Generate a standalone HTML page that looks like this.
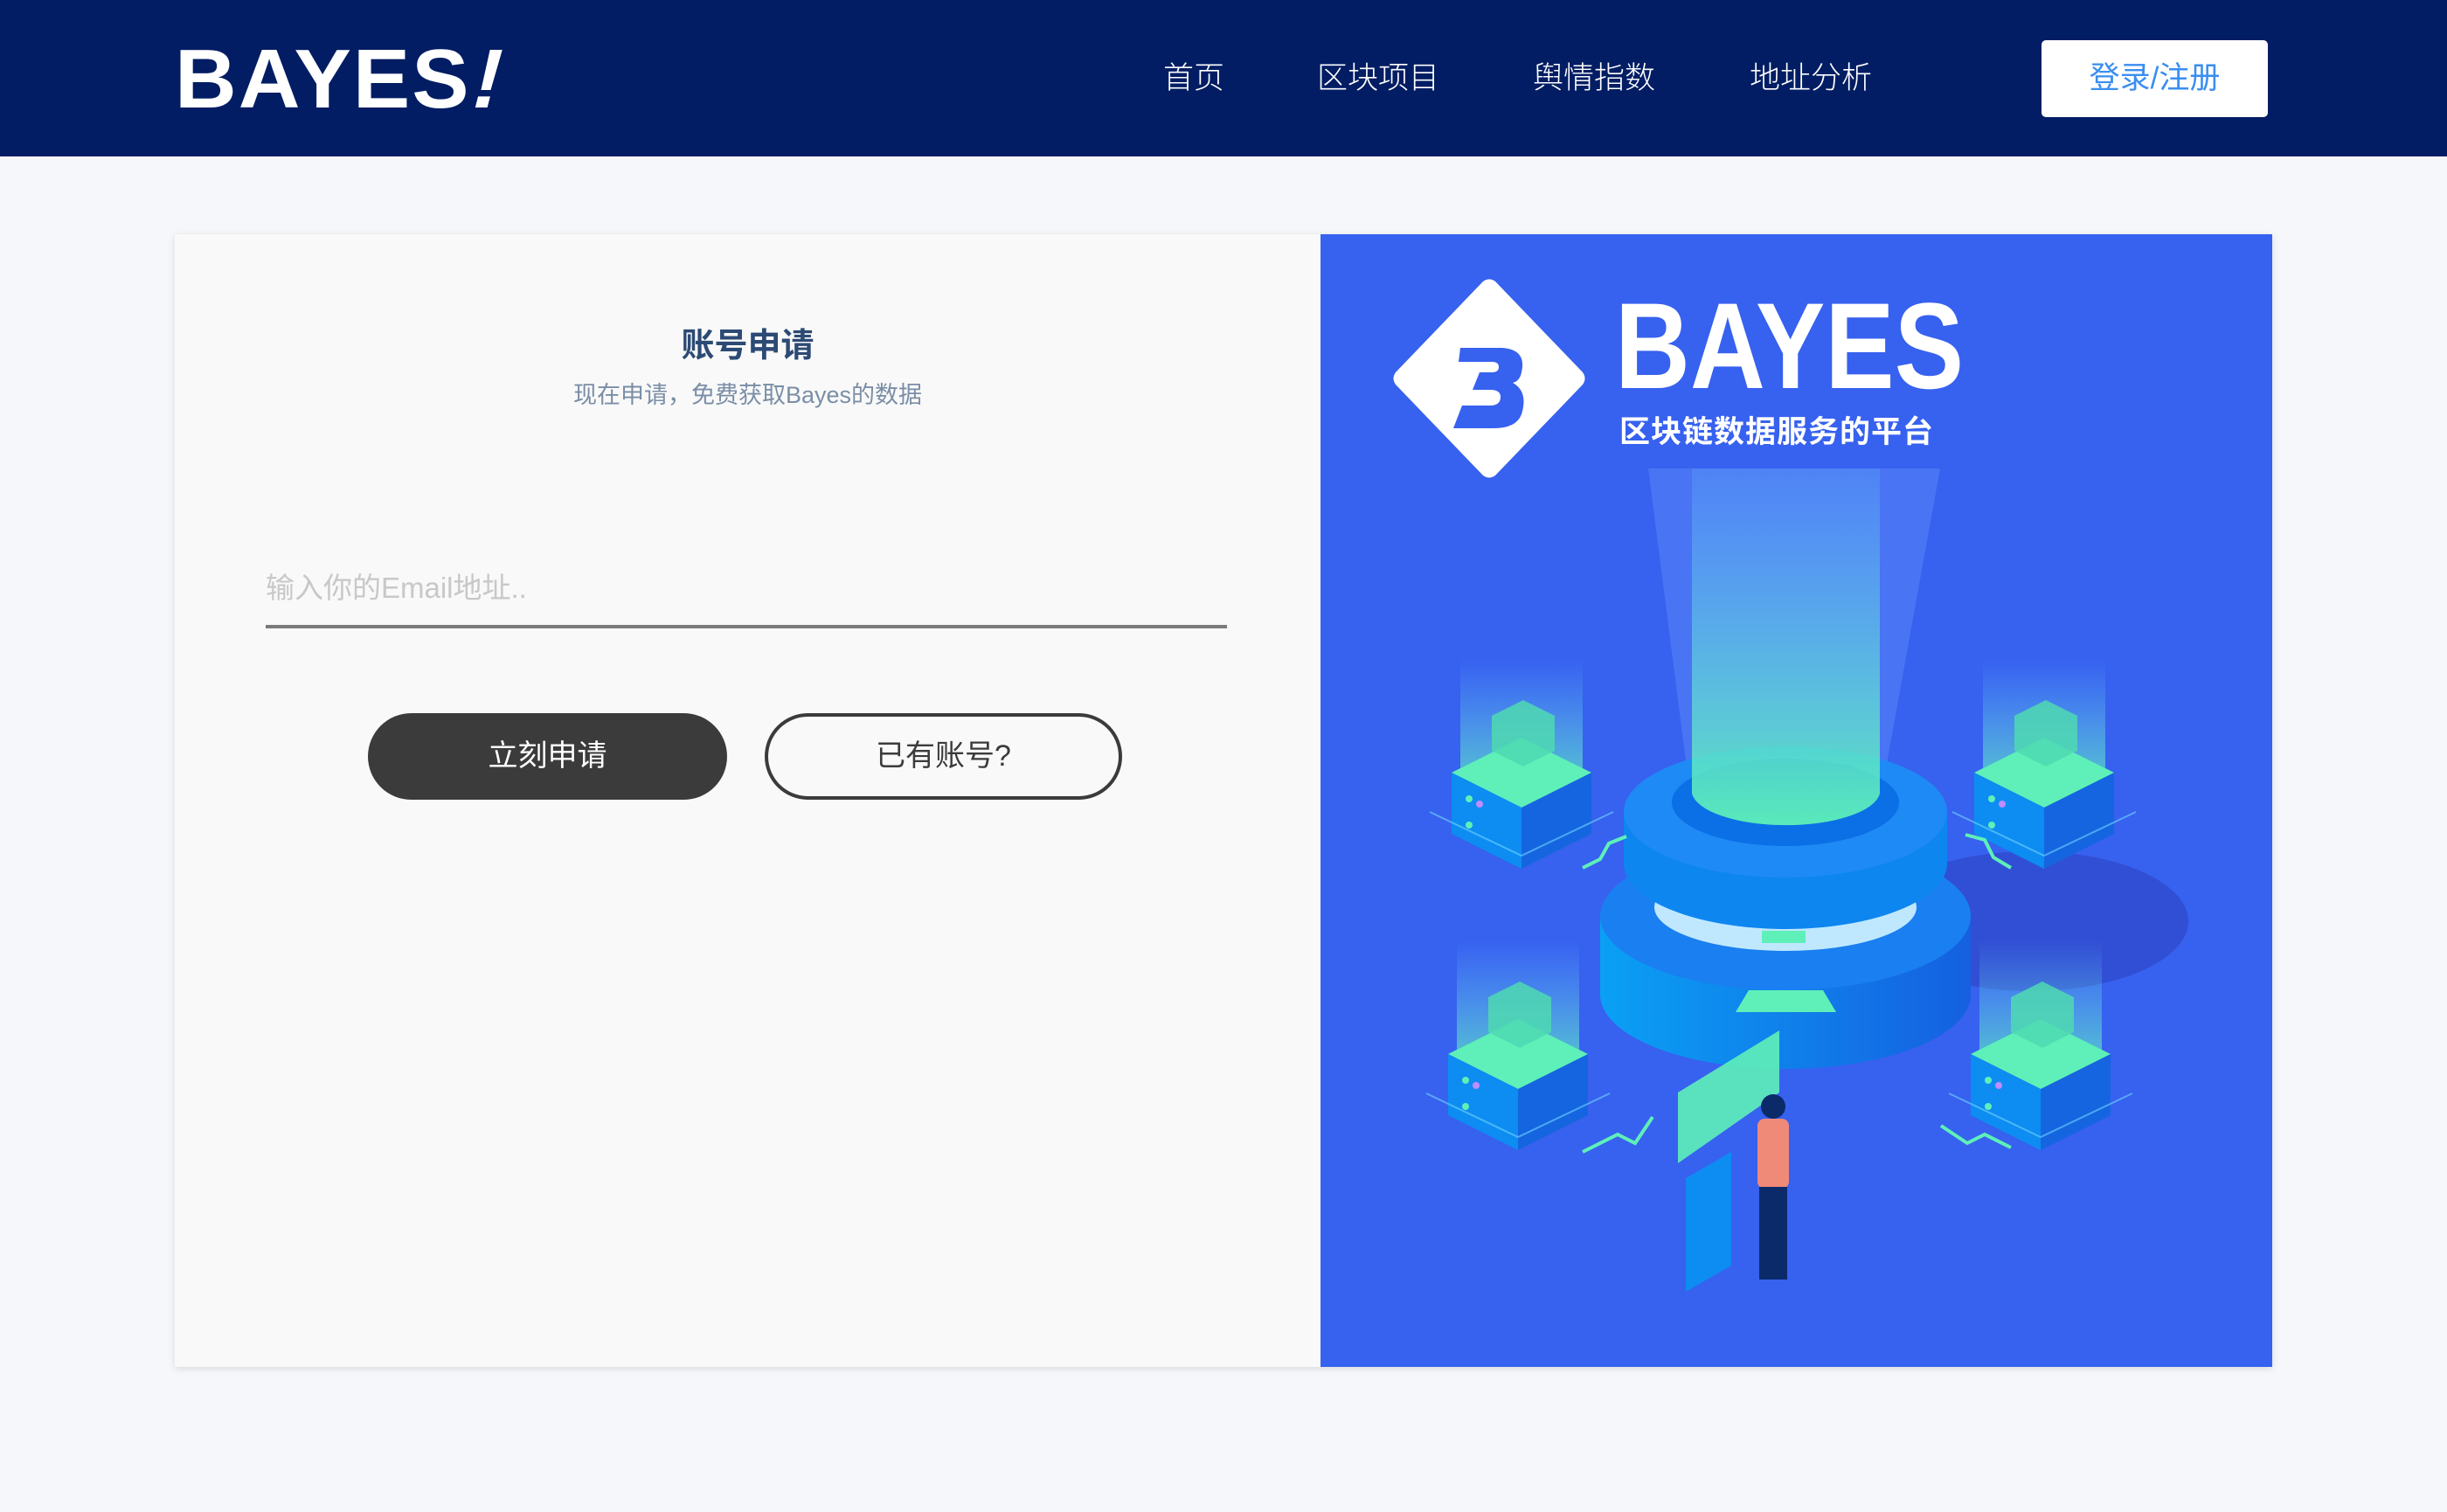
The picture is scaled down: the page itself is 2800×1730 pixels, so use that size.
<!DOCTYPE html>
<html><head><meta charset="utf-8">
<style>
*{margin:0;padding:0;box-sizing:border-box}
body{width:2800px;height:1730px;background:#f6f7fa;font-family:"Liberation Sans","Noto Sans CJK SC",sans-serif;position:relative;overflow:hidden}
.hdr{position:absolute;left:0;top:0;width:2800px;height:179px;background:#021d63}
.logo{position:absolute;left:200px;top:36px;font-size:96px;font-weight:bold;color:#fff;letter-spacing:2px;line-height:110px;transform:scaleX(1.02);transform-origin:0 0;font-family:"Liberation Sans","DejaVu Sans",sans-serif}
.logo i{display:inline-block;transform:skewX(-14deg);font-style:normal;margin-left:4px}
.nav{position:absolute;top:68px;color:#fff;font-size:35px;line-height:44px;font-weight:300}
.login{position:absolute;left:2336px;top:46px;width:259px;height:88px;background:#fff;border-radius:5px;color:#3a8ef0;font-size:35px;line-height:88px;text-align:center}
.card{position:absolute;left:200px;top:268px;width:2400px;height:1296px;box-shadow:0 2px 8px rgba(0,0,0,.12);background:#f9f9f9}
.right{position:absolute;left:1311px;top:0;width:1089px;height:1296px;background:#3761ef;overflow:hidden}
.title{position:absolute;left:0;width:1311px;top:103px;text-align:center;font-size:38px;font-weight:bold;color:#2c4a74;line-height:50px}
.sub{position:absolute;left:0;width:1311px;top:166px;text-align:center;font-size:27px;color:#7a8ea6;line-height:36px}
.ph{position:absolute;left:104px;top:383px;font-size:33px;color:#c8c8c8;line-height:44px}
.line{position:absolute;left:104px;top:447px;width:1100px;height:4px;background:#7a7a7a}
.b1{position:absolute;left:221px;top:548px;width:411px;height:99px;border-radius:50px;background:#3b3b3b;color:#fff;font-size:34px;line-height:99px;text-align:center}
.b2{position:absolute;left:675px;top:548px;width:409px;height:99px;border-radius:50px;border:4px solid #3b3b3b;color:#3b3b3b;font-size:34px;line-height:91px;text-align:center}
.bt{position:absolute;left:337px;top:53px;font-size:140px;font-weight:bold;color:#fff;line-height:150px;transform:scaleX(0.85);transform-origin:0 0}
.bs{position:absolute;left:342px;top:205px;font-size:35px;font-weight:bold;color:#fff;line-height:44px;letter-spacing:1px}
</style></head><body>
<div class="hdr">
<div class="logo">BAYES<i>!</i></div>
<div class="nav" style="left:1331px">首页</div>
<div class="nav" style="left:1507px">区块项目</div>
<div class="nav" style="left:1754px">舆情指数</div>
<div class="nav" style="left:2002px">地址分析</div>
<div class="login">登录/注册</div>
</div>
<div class="card">
<div class="title">账号申请</div>
<div class="sub">现在申请，免费获取Bayes的数据</div>
<div class="ph">输入你的Email地址..</div>
<div class="line"></div>
<div class="b1">立刻申请</div>
<div class="b2">已有账号?</div>
<div class="right">
<svg width="1089" height="1296" viewBox="0 0 1089 1296" style="position:absolute;left:0;top:0">
<defs>
<linearGradient id="beam" x1="0" y1="0" x2="0" y2="1"><stop offset="0" stop-color="#6fd6ff" stop-opacity="0.15"/><stop offset="1" stop-color="#5ef0b8" stop-opacity="0.95"/></linearGradient>
<linearGradient id="col" x1="0" y1="0" x2="0" y2="1"><stop offset="0" stop-color="#6fd6ff" stop-opacity="0"/><stop offset="1" stop-color="#5ef0b8" stop-opacity="0.8"/></linearGradient>
<linearGradient id="ped" x1="0" y1="0" x2="1" y2="0"><stop offset="0" stop-color="#0aa0f5"/><stop offset="1" stop-color="#1560e0"/></linearGradient>
<g id="srv">
<rect x="160" y="400" width="140" height="160" fill="url(#col)"/>
<path d="M150 530 L230 490 L310 530 L310 600 L230 640 L150 600 Z" fill="#1565e0"/>
<path d="M150 530 L230 490 L310 530 L230 570 Z" fill="#5ef0b8"/>
<path d="M150 530 L230 570 L230 640 L150 600 Z" fill="#0d8cf2"/>
<path d="M196 465 L232 447 L268 465 L268 505 L232 523 L196 505 Z" fill="#4fd9b2" opacity="0.85"/>
<circle cx="170" cy="560" r="4" fill="#5ef0b8"/><circle cx="182" cy="566" r="4" fill="#c08cff"/><circle cx="170" cy="590" r="4" fill="#5ef0b8"/>
<path d="M125 575 L230 625 L335 575" fill="none" stroke="#6fd6ff" stroke-width="2" opacity="0.6"/>
</g>
</defs>
<ellipse cx="813" cy="786" rx="180" ry="80" fill="#2f47c9" opacity="0.7"/>
<path d="M375 268 L709 268 L640 650 L424 650 Z" fill="#7fb0ff" opacity="0.25"/>
<path d="M320 780 L320 870 A212 85 0 0 0 744 870 L744 780 Z" fill="url(#ped)"/>
<ellipse cx="532" cy="780" rx="212" ry="85" fill="#1a7ff0"/>
<ellipse cx="532" cy="770" rx="150" ry="50" fill="#bfe8ff"/>
<path d="M347 661 L347 720 A185 75 0 0 0 717 720 L717 661 Z" fill="#0d86f0"/>
<ellipse cx="532" cy="661" rx="185" ry="75" fill="#1e8af5"/>
<ellipse cx="532" cy="650" rx="130" ry="50" fill="#0b6fe6"/>
<path d="M425 268 L640 268 L640 640 A108 40 0 0 1 425 640 Z" fill="url(#beam)"/>
<rect x="505" y="797" width="50" height="14" fill="#5ef0b8"/>
<path d="M490 865 L575 865 L590 890 L475 890 Z" fill="#5ef0b8"/>
<use href="#srv" x="0" y="86"/>
<use href="#srv" x="598" y="86"/>
<use href="#srv" x="-4" y="408"/>
<use href="#srv" x="594" y="408"/>
<path d="M300 725 L320 715 L330 697 L350 689" fill="none" stroke="#5ef0b8" stroke-width="4"/>
<path d="M300 1050 L340 1030 L360 1040 L380 1010" fill="none" stroke="#5ef0b8" stroke-width="4"/>
<path d="M790 725 L770 713 L760 693 L738 687" fill="none" stroke="#5ef0b8" stroke-width="4"/>
<path d="M790 1045 L760 1030 L740 1040 L710 1020" fill="none" stroke="#5ef0b8" stroke-width="4"/>
<path d="M409 982 L525 911 L525 982 L409 1063 Z" fill="#5ef0b8" opacity="0.9"/>
<path d="M418 1080 L470 1050 L470 1180 L418 1210 Z" fill="#0d8cf2"/>
<rect x="500" y="1012" width="36" height="80" rx="8" fill="#f08a78"/>
<circle cx="518" cy="998" r="14" fill="#0b2a6a"/>
<rect x="502" y="1090" width="32" height="106" fill="#0b2a6a"/>
</svg>
<svg width="230" height="230" viewBox="0 0 230 230" style="position:absolute;left:78px;top:50px">
<path d="M108 4 Q115 -1 122 4 L222 108 Q227 115 222 122 L122 226 Q115 231 108 226 L8 122 Q3 115 8 108 Z" fill="#fff"/>
<path d="M82 80 L130 80 Q158 82 152 108 Q150 118 142 120 Q160 130 152 156 Q146 172 120 172 L74 172 L84 146 L116 146 Q128 146 128 136 Q128 128 116 128 L96 128 L104 108 L118 108 Q126 108 126 102 Q126 96 118 96 L80 96 Z" fill="#3761ef"/>
</svg>
<div class="bt">BAYES</div>
<div class="bs">区块链数据服务的平台</div>
</div>
</div>
</body></html>
